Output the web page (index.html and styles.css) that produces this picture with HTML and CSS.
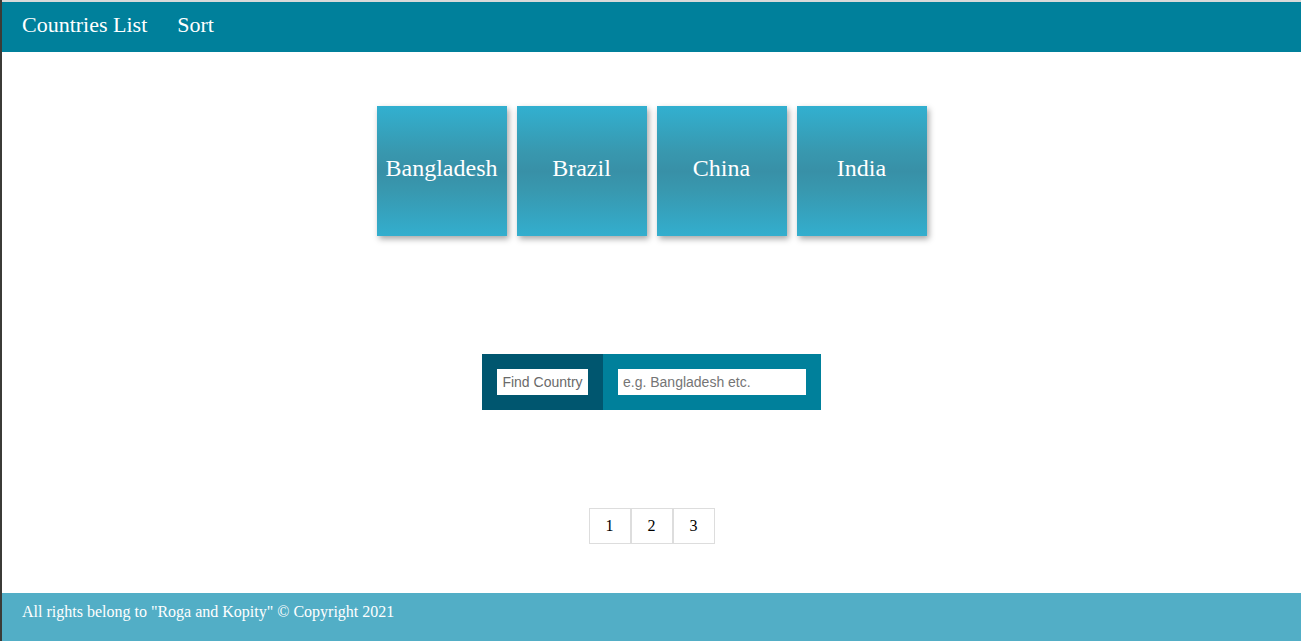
FILE: index.html
```html
<!DOCTYPE html>
<html lang="en">
<head>
<meta charset="utf-8">
<title>Countries List</title>
<link rel="stylesheet" href="styles.css">
</head>
<body>
<div class="page">
  <header class="topbar">
    <nav class="nav">
      <a class="nav-link" href="#">Countries List</a>
      <a class="nav-link" href="#">Sort</a>
    </nav>
  </header>
  <main class="main">
    <section class="cards">
      <div class="card">Bangladesh</div>
      <div class="card">Brazil</div>
      <div class="card">China</div>
      <div class="card">India</div>
    </section>
    <form class="search">
      <div class="search-label-wrap"><label class="search-label" for="q">Find Country</label></div>
      <div class="search-input-wrap"><input id="q" class="search-input" type="text" placeholder="e.g. Bangladesh etc."></div>
    </form>
    <nav class="pagination">
      <a class="page-btn" href="#">1</a>
      <a class="page-btn" href="#">2</a>
      <a class="page-btn" href="#">3</a>
    </nav>
  </main>
  <footer class="footer">All rights belong to "Roga and Kopity" © Copyright 2021</footer>
</div>
</body>
</html>
```
FILE: styles.css
```css
html {
  background: #3b3b37;
}
body {
  margin: 0;
  font-family: "Liberation Serif", "Times New Roman", serif;
}
.page {
  margin-left: 2px;
  border-top: 2px solid #d9d9d9;
  background: #fff;
  height: 639px;
  display: flex;
  flex-direction: column;
}
.topbar {
  height: 50px;
  box-sizing: border-box;
  background: #00809b;
  display: flex;
  align-items: center;
  padding: 0 0 4px 5px;
}
.nav {
  display: flex;
}
.nav-link {
  color: #fff;
  text-decoration: none;
  font-size: 22px;
  padding: 0 15px;
  line-height: 26px;
}
.main {
  flex: 1;
  display: flex;
  flex-direction: column;
  align-items: center;
}
.cards {
  margin-top: 54px;
  display: flex;
  gap: 10px;
}
.card {
  width: 130px;
  height: 130px;
  box-sizing: border-box;
  padding-bottom: 6px;
  display: flex;
  align-items: center;
  justify-content: center;
  color: #fff;
  font-size: 24px;
  background: linear-gradient(#32b0d0 0%, #3898af 35%, #3890a7 50%, #3898af 65%, #33aece 100%);
  box-shadow: 2px 3px 6px rgba(0, 0, 0, 0.35);
}
.search {
  margin: 118px 0 0;
  display: flex;
  height: 56px;
}
.search-label-wrap {
  background: #00566f;
  padding: 15px;
  display: flex;
}
.search-label {
  background: #fff;
  width: 91px;
  height: 26px;
  display: flex;
  align-items: center;
  justify-content: center;
  font-family: "Liberation Sans", Arial, sans-serif;
  font-size: 14px;
  color: #6a6a6a;
}
.search-input-wrap {
  background: #00809b;
  padding: 15px;
  display: flex;
}
.search-input {
  width: 188px;
  height: 26px;
  box-sizing: border-box;
  border: none;
  outline: none;
  padding: 0 5px;
  font-family: "Liberation Sans", Arial, sans-serif;
  font-size: 14px;
  color: #333;
}
.search-input::placeholder {
  color: #757575;
}
.pagination {
  margin-top: 98px;
  display: flex;
}
.page-btn {
  width: 42px;
  height: 36px;
  box-sizing: border-box;
  border: 1px solid #dddddd;
  display: flex;
  align-items: center;
  justify-content: center;
  color: #000;
  text-decoration: none;
  font-size: 16px;
}
.footer {
  height: 48px;
  box-sizing: border-box;
  background: #52aec6;
  color: #fff;
  font-size: 16px;
  padding: 10px 20px 0;
}
```
